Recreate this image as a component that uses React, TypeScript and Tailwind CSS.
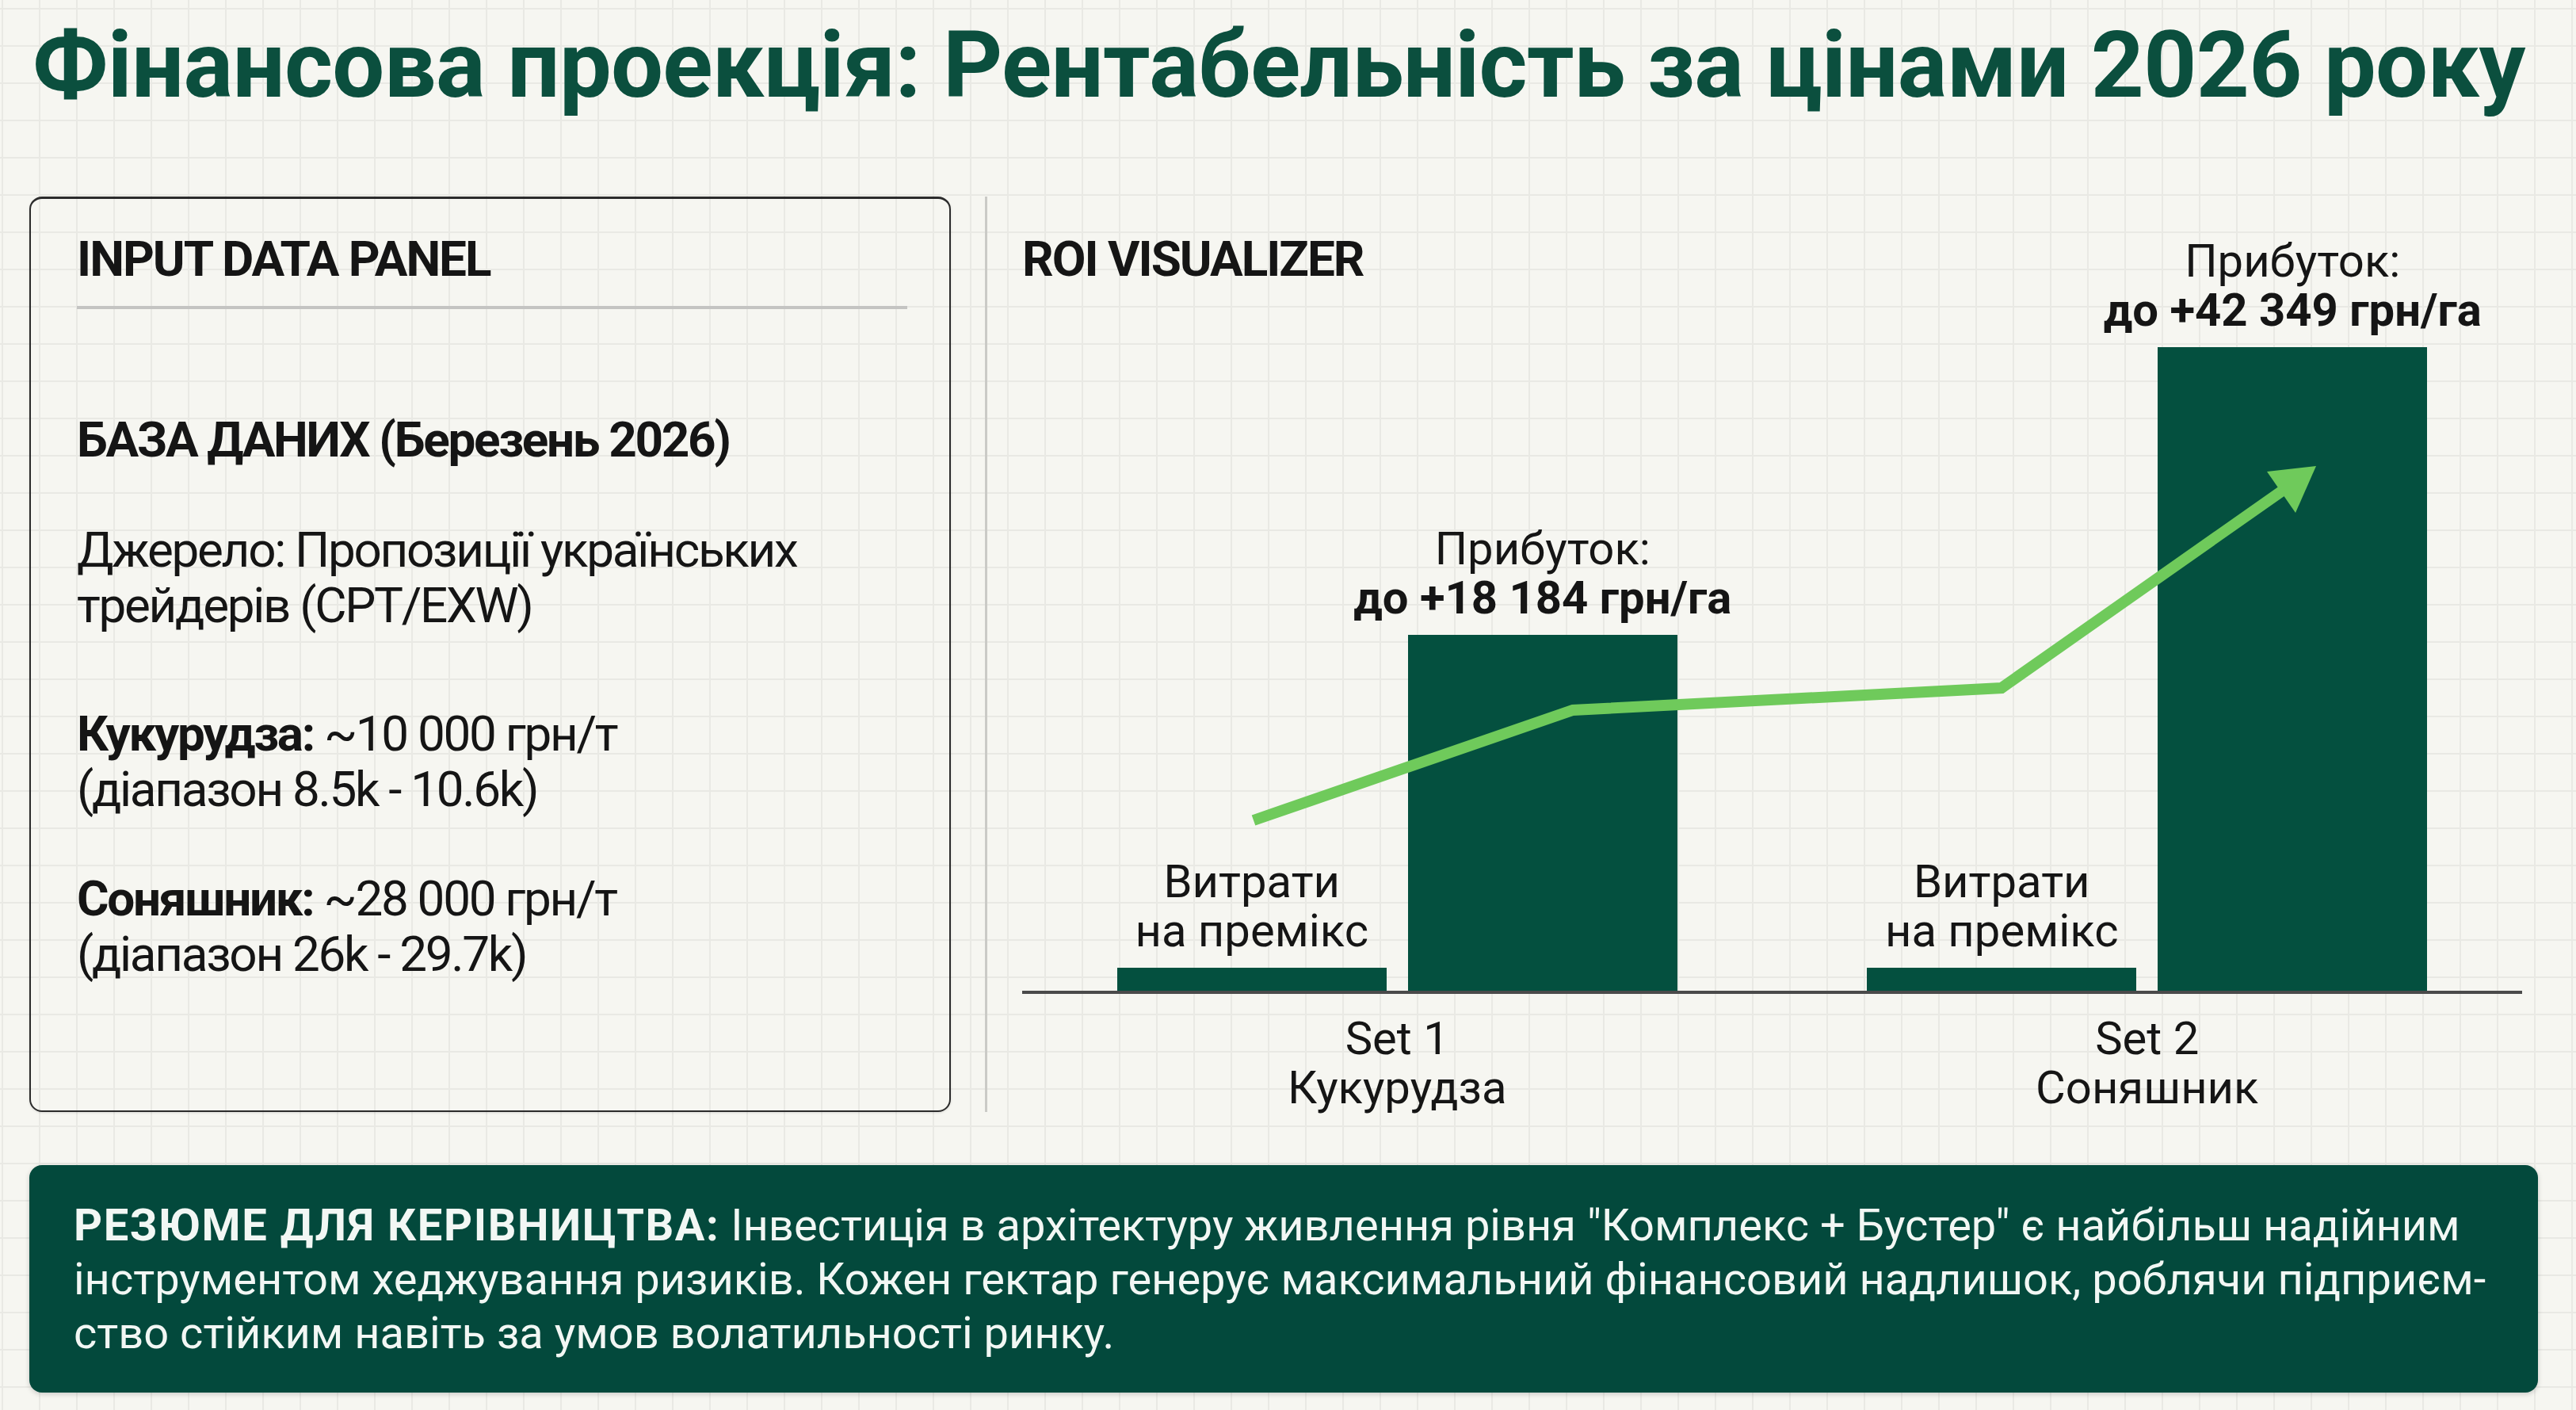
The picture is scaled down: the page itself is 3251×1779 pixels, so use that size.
import React from "react";

const font = { fontFamily: "Roboto, 'Noto Sans', sans-serif" };

const BarGroup = ({
  bigHeight,
  profit,
}: {
  bigHeight: string;
  profit: string;
}) => (
  <div className="flex items-end justify-center gap-[27px]">
    <div className="flex w-[340px] flex-col items-center">
      <div className="mb-[16px] text-center text-[58px] leading-[62px] text-[#151515]">
        <div>Витрати</div>
        <div>на премікс</div>
      </div>
      <div className="h-[29px] w-[340px] bg-[#04503f]" />
    </div>
    <div className="flex w-[340px] flex-col items-center">
      <div className="mb-[16px] whitespace-nowrap text-center text-[58px] leading-[62px] text-[#151515]">
        <div>Прибуток:</div>
        <div className="font-bold">{profit}</div>
      </div>
      <div className={`w-[340px] bg-[#04503f] ${bigHeight}`} />
    </div>
  </div>
);

const XLabel = ({ set, crop }: { set: string; crop: string }) => (
  <div className="mt-[25px] text-center text-[58px] leading-[62px] text-[#151515]">
    <div>{set}</div>
    <div>{crop}</div>
  </div>
);

export default function App() {
  return (
    <div
      style={font}
      className="relative h-[1779px] w-[3251px] overflow-hidden bg-[#f6f6f1] bg-[linear-gradient(to_right,#e9e9e4_2px,transparent_2px),linear-gradient(to_bottom,#e9e9e4_2px,transparent_2px)] bg-size-[47px_47px] bg-[position:2px_10px] px-[37px]"
    >
      {/* Title */}
      <h1 className="whitespace-nowrap pl-[4px] pt-[24px] text-[117px] font-bold leading-[117px] tracking-[-0.7px] text-[#0b4f3e]">
        Фінансова проекція: Рентабельність за цінами 2026 року
      </h1>

      {/* Main row */}
      <div className="mt-[107px] flex h-[1155px]">
        {/* Input panel */}
        <div className="w-[1163px] rounded-[16px] border-2 border-t-[3px] border-[#2b2b2b] pl-[58px] pr-[53px] pt-[41px] text-[62px] leading-[70px] tracking-[-2.3px] text-[#151515] shadow-[0_1px_3px_rgba(0,0,0,0.12)]">
          <div className="font-bold tracking-[-2px]">INPUT DATA PANEL</div>
          <div className="mt-[24px] h-[4px] bg-[#c4c4c2]" />
          <div className="mt-[130px] font-bold">БАЗА ДАНИХ (Березень 2026)</div>
          <div className="mt-[69px]">
            Джерело: Пропозиції українських
            <br />
            трейдерів (CPT/EXW)
          </div>
          <div className="mt-[92px]">
            <span className="font-bold">Кукурудза:</span> ~10 000 грн/т
            <br />
            (діапазон 8.5k - 10.6k)
          </div>
          <div className="mt-[68px]">
            <span className="font-bold">Соняшник:</span> ~28 000 грн/т
            <br />
            (діапазон 26k - 29.7k)
          </div>
        </div>

        {/* Separator */}
        <div className="ml-[43px] w-[3px] bg-[#cacac6]" />

        {/* ROI visualizer */}
        <div className="relative ml-[44px] mr-[31px] grid flex-1 grid-cols-2">
          <div className="flex flex-col justify-end">
            <div className="mb-auto mt-[44px] text-[62px] font-bold leading-[70px] tracking-[-2px] text-[#151515]">
              ROI VISUALIZER
            </div>
            <BarGroup bigHeight="h-[449px]" profit="до +18 184 грн/га" />
            <div className="h-[4px] bg-[#4a4a4a]" />
            <XLabel set="Set 1" crop="Кукурудза" />
          </div>
          <div className="flex flex-col justify-end">
            <BarGroup bigHeight="h-[812px]" profit="до +42 349 грн/га" />
            <div className="h-[4px] bg-[#4a4a4a]" />
            <XLabel set="Set 2" crop="Соняшник" />
          </div>

          {/* Trend arrow */}
          <svg
            className="pointer-events-none absolute left-0 top-0 h-[1155px] w-[1893px]"
            viewBox="0 0 1893 1155"
          >
            <polyline
              points="292,787 695,648 1236,620 1592,370"
              fill="none"
              stroke="#6fca5b"
              strokeWidth="14"
              strokeLinejoin="miter"
            />
            <polygon points="1633,340 1571,347 1607,399" fill="#6fca5b" />
          </svg>
        </div>
      </div>

      {/* Executive summary */}
      <div className="mr-[11px] mt-[67px] flex h-[287px] items-center rounded-[16px] bg-[#03493c] px-[56px] text-[56px] leading-[68px] text-[#f2f7f4] shadow-[0_2px_6px_rgba(0,0,0,0.18)]">
        <div className="whitespace-nowrap">
          <span className="font-bold tracking-[1.6px]">РЕЗЮМЕ ДЛЯ КЕРІВНИЦТВА:</span> Інвестиція в архітектуру живлення рівня "Комплекс + Бустер" є найбільш надійним
          <br />
          інструментом хеджування ризиків. Кожен гектар генерує максимальний фінансовий надлишок, роблячи підприєм-
          <br />
          ство стійким навіть за умов волатильності ринку.
        </div>
      </div>
    </div>
  );
}
